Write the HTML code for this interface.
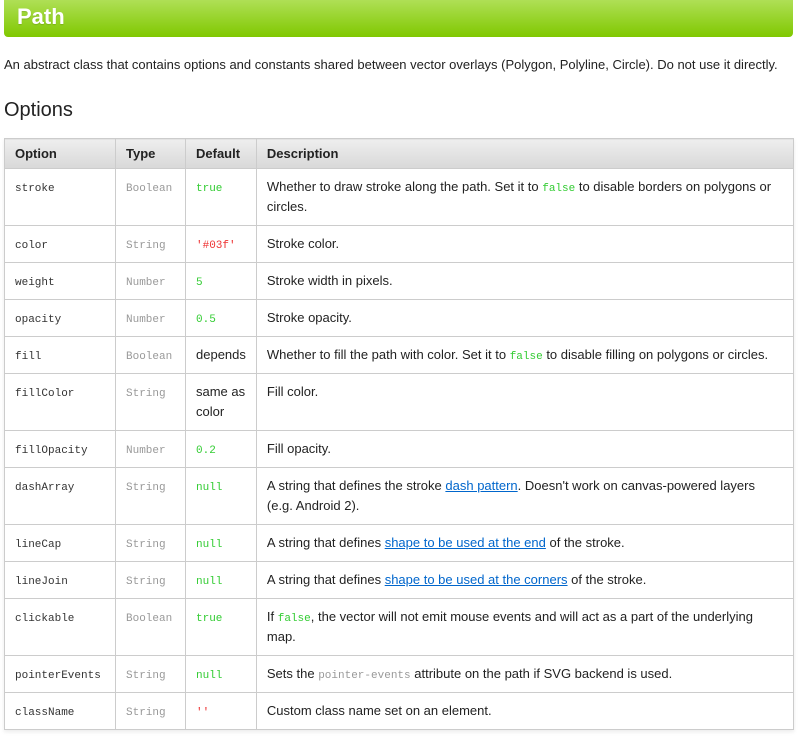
<!DOCTYPE html>
<html><head><meta charset="utf-8"><style>
body{margin:0;background:#fff;font-family:"Liberation Sans",sans-serif;color:#222;font-size:13px;}
.banner{position:absolute;left:4px;top:-4px;width:789px;height:41px;border-radius:4px;background:linear-gradient(#b4e25f,#80c800);}
.banner span{position:absolute;left:13px;top:8px;color:#fff;font-weight:bold;font-size:22px;text-shadow:0 1px 1px rgba(0,0,0,.15);}
p.d{position:absolute;left:4px;top:57px;margin:0;font-size:13px;}
h2{position:absolute;left:4px;top:99px;margin:0;font-weight:normal;font-size:20px;}
table{position:absolute;left:4px;top:138px;width:790px;border-collapse:collapse;box-shadow:0 2px 4px rgba(0,0,0,.08);}
td,th{border:1px solid #ccc;padding:8px 10px 8px;line-height:20px;vertical-align:top;text-align:left;}
th{background:linear-gradient(#eee,#d8d8d8);font-weight:bold;padding:5px 10px 4px;}
code{font-family:"Liberation Mono","Courier New",monospace;font-size:11px;line-height:1;}
td:nth-child(1) code{color:#333}
td:nth-child(2) code{color:#999}
.g{color:#3c3}
.r{color:#e33}
.gr{color:#999}
a{color:#0066cc;}
</style></head><body>
<div class="banner"><span>Path</span></div>
<p class="d">An abstract class that contains options and constants shared between vector overlays (Polygon, Polyline, Circle). Do not use it directly.</p>
<h2>Options</h2>
<table>
<tr><th style="width:90px">Option</th><th style="width:49px">Type</th><th style="width:49px">Default</th><th>Description</th></tr>
<tr><td><code>stroke</code></td><td><code>Boolean</code></td><td><code class="g">true</code></td><td>Whether to draw stroke along the path. Set it to <code class="g">false</code> to disable borders on polygons or circles.</td></tr>
<tr><td><code>color</code></td><td><code>String</code></td><td><code class="r">'#03f'</code></td><td>Stroke color.</td></tr>
<tr><td><code>weight</code></td><td><code>Number</code></td><td><code class="g">5</code></td><td>Stroke width in pixels.</td></tr>
<tr><td><code>opacity</code></td><td><code>Number</code></td><td><code class="g">0.5</code></td><td>Stroke opacity.</td></tr>
<tr><td><code>fill</code></td><td><code>Boolean</code></td><td>depends</td><td>Whether to fill the path with color. Set it to <code class="g">false</code> to disable filling on polygons or circles.</td></tr>
<tr><td><code>fillColor</code></td><td><code>String</code></td><td>same as color</td><td>Fill color.</td></tr>
<tr><td><code>fillOpacity</code></td><td><code>Number</code></td><td><code class="g">0.2</code></td><td>Fill opacity.</td></tr>
<tr><td><code>dashArray</code></td><td><code>String</code></td><td><code class="g">null</code></td><td>A string that defines the stroke <a href="#">dash pattern</a>. Doesn't work on canvas-powered layers (e.g. Android 2).</td></tr>
<tr><td><code>lineCap</code></td><td><code>String</code></td><td><code class="g">null</code></td><td>A string that defines <a href="#">shape to be used at the end</a> of the stroke.</td></tr>
<tr><td><code>lineJoin</code></td><td><code>String</code></td><td><code class="g">null</code></td><td>A string that defines <a href="#">shape to be used at the corners</a> of the stroke.</td></tr>
<tr><td><code>clickable</code></td><td><code>Boolean</code></td><td><code class="g">true</code></td><td>If <code class="g">false</code>, the vector will not emit mouse events and will act as a part of the underlying map.</td></tr>
<tr><td><code>pointerEvents</code></td><td><code>String</code></td><td><code class="g">null</code></td><td>Sets the <code class="gr">pointer-events</code> attribute on the path if SVG backend is used.</td></tr>
<tr><td><code>className</code></td><td><code>String</code></td><td><code class="r">''</code></td><td>Custom class name set on an element.</td></tr>
</table>
</body></html>
